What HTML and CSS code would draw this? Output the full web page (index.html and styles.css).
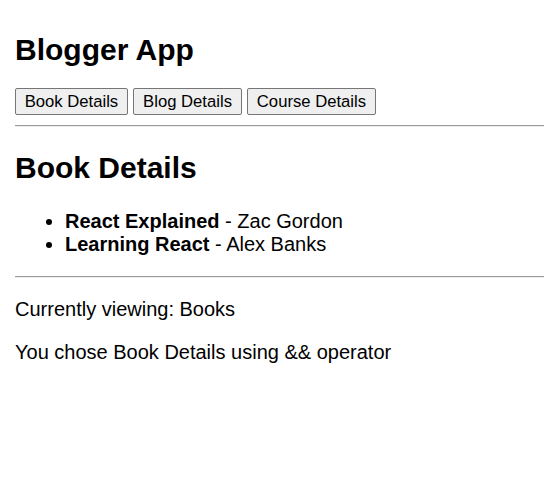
FILE: index.html
```html
<!DOCTYPE html>
<html lang="en">
<head>
<meta charset="utf-8">
<title>Blogger App</title>
<link rel="stylesheet" href="styles.css">
</head>
<body>
<div class="app">
  <h1 class="title">Blogger App</h1>
  <div class="nav">
    <button class="btn">Book Details</button>
    <button class="btn">Blog Details</button>
    <button class="btn">Course Details</button>
  </div>
  <hr class="rule">
  <section class="details">
    <h2 class="heading">Book Details</h2>
    <ul class="list">
      <li class="item"><b>React Explained</b> - Zac Gordon</li>
      <li class="item"><b>Learning React</b> - Alex Banks</li>
    </ul>
  </section>
  <hr class="rule">
  <p class="status">Currently viewing: Books</p>
  <p class="status">You chose Book Details using &amp;&amp; operator</p>
</div>
</body>
</html>
```

FILE: styles.css
```css
html, body {
  margin: 0;
  padding: 0;
  background: #fff;
}
body {
  font-family: "Liberation Sans", Arial, sans-serif;
  font-size: 20px;
  line-height: 23px;
  color: #000;
}
.app {
  padding: 33px 10px 0 15px;
}
.title {
  font-size: 30px;
  line-height: 34px;
  font-weight: bold;
  margin: 0;
}
.nav {
  display: flex;
  gap: 5.5px;
  margin-top: 21px;
}
.btn {
  font-family: "Liberation Sans", Arial, sans-serif;
  font-size: 16.67px;
  line-height: 19px;
  height: 27px;
  padding: 0 8.7px;
  border: 1px solid #767676;
  border-radius: 2px;
  background: #efefef;
  color: #000;
}
.rule {
  margin: 10px 0 0;
  height: 0;
  border: 0;
  border-top: 1px solid #9a9a9a;
  border-bottom: 1px solid #eeeeee;
}
.heading {
  font-size: 30px;
  line-height: 34px;
  font-weight: bold;
  margin: 24px 0 0;
}
.list {
  margin: 25px 0 20px;
  padding-left: 50px;
}
.item {
  line-height: 23px;
}
.details + .rule {
  margin-top: 0;
}
.status {
  margin: 20px 0 0;
}
```
